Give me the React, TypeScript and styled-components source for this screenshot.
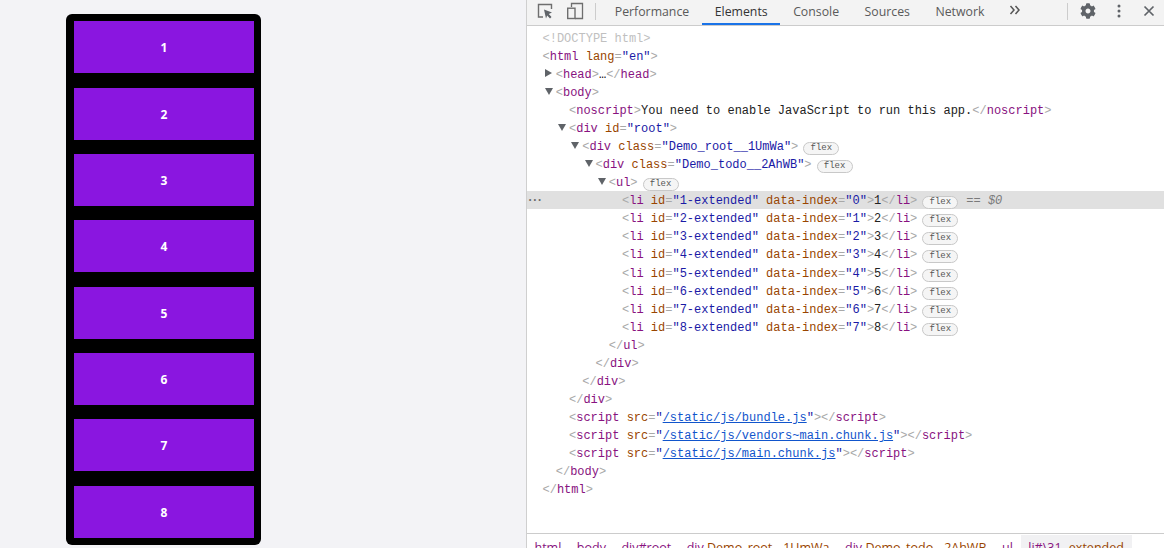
import React from 'react'
import styled, { createGlobalStyle } from 'styled-components'
import { FaCog } from 'react-icons/fa'

const GlobalStyle = createGlobalStyle`
  html, body {
    margin: 0;
    padding: 0;
    height: 100%;
    overflow: hidden;
    background: #fff;
  }
  * {
    box-sizing: border-box;
  }
`

const todos = ['1', '2', '3', '4', '5', '6', '7', '8']
const tabs = ['Performance', 'Elements', 'Console', 'Sources', 'Network']

function Open({ name, children }: { name: string; children?: React.ReactNode }) {
  return (
    <>
      <Punct>&lt;</Punct>
      <TagName>{name}</TagName>
      {children}
      <Punct>&gt;</Punct>
    </>
  )
}

function Close({ name }: { name: string }) {
  return (
    <>
      <Punct>&lt;/</Punct>
      <TagName>{name}</TagName>
      <Punct>&gt;</Punct>
    </>
  )
}

function Attr({ name, value }: { name: string; value: string }) {
  return (
    <>
      {' '}
      <AttrName>{name}</AttrName>
      <Punct>=</Punct>
      <AttrValue>"{value}"</AttrValue>
    </>
  )
}

function ScriptRow({ src }: { src: string }) {
  return (
    <Row $depth={2}>
      <Open name="script">
        {' '}
        <AttrName>src</AttrName>
        <Punct>=</Punct>
        <AttrValue>"</AttrValue>
        <SourceLink>{src}</SourceLink>
        <AttrValue>"</AttrValue>
      </Open>
      <Close name="script" />
    </Row>
  )
}

export default function App() {
  return (
    <>
      <GlobalStyle />
      <Page>
        <DemoPane>
          <TodoList>
            {todos.map((todo) => (
              <TodoItem key={todo}>{todo}</TodoItem>
            ))}
          </TodoList>
        </DemoPane>

        <DevTools>
          <Toolbar>
            <IconButton $width={30}>
              <svg width="18" height="18" viewBox="0 0 18 18" fill="none">
                <path d="M7 15H2.500V2.500H15.500V7" stroke="#6e6e6e" strokeWidth="1.400" />
                <path d="M8 7.500 16 10.500 12.800 12 15.500 15 14 16.500 11.200 13.500 10 16.500Z" fill="#5f6368" />
              </svg>
            </IconButton>
            <IconButton $width={30}>
              <svg width="18" height="18" viewBox="0 0 18 18" fill="none">
                <path d="M5.500 5V1.500H16.500V16.500H9" stroke="#6e6e6e" strokeWidth="1.300" />
                <rect x="1.700" y="6.200" width="7.300" height="10.300" stroke="#6e6e6e" strokeWidth="1.400" />
              </svg>
            </IconButton>
            <Separator $left={5} $right={6} />
            {tabs.map((tab) => (
              <Tab key={tab} $active={tab === 'Elements'}>
                {tab}
              </Tab>
            ))}
            <MoreTabs>
              <svg width="12" height="10" viewBox="0 0 12 10" fill="none">
                <path d="M1.500 1 5 5 1.500 9M6.500 1 10 5 6.500 9" stroke="#555" strokeWidth="1.500" />
              </svg>
            </MoreTabs>
            <ToolbarEnd>
              <Separator $left={1} $right={11} />
              <IconButton $width={18}>
                <FaCog size={16} color="#5f6368" />
              </IconButton>
              <IconButton $width={44}>
                <svg width="4" height="14" viewBox="0 0 4 14" fill="#5f6368">
                  <circle cx="2" cy="2" r="1.500" />
                  <circle cx="2" cy="7" r="1.500" />
                  <circle cx="2" cy="12" r="1.500" />
                </svg>
              </IconButton>
              <IconButton $width={16}>
                <svg width="12" height="12" viewBox="0 0 12 12" fill="none">
                  <path d="M1.500 1.500 10.500 10.500M10.500 1.500 1.500 10.500" stroke="#5f6368" strokeWidth="1.700" />
                </svg>
              </IconButton>
            </ToolbarEnd>
          </Toolbar>

          <Tree>
            <Row $depth={0}>
              <Doctype>&lt;!DOCTYPE html&gt;</Doctype>
            </Row>
            <Row $depth={0}>
              <Open name="html">
                <Attr name="lang" value="en" />
              </Open>
            </Row>
            <Row $depth={1}>
              <Arrow $open={false} />
              <Open name="head" />…<Close name="head" />
            </Row>
            <Row $depth={1}>
              <Arrow $open />
              <Open name="body" />
            </Row>
            <Row $depth={2}>
              <Open name="noscript" />
              <Plain>You need to enable JavaScript to run this app.</Plain>
              <Close name="noscript" />
            </Row>
            <Row $depth={2}>
              <Arrow $open />
              <Open name="div">
                <Attr name="id" value="root" />
              </Open>
            </Row>
            <Row $depth={3}>
              <Arrow $open />
              <Open name="div">
                <Attr name="class" value="Demo_root__1UmWa" />
              </Open>
              <FlexBadge>flex</FlexBadge>
            </Row>
            <Row $depth={4}>
              <Arrow $open />
              <Open name="div">
                <Attr name="class" value="Demo_todo__2AhWB" />
              </Open>
              <FlexBadge>flex</FlexBadge>
            </Row>
            <Row $depth={5}>
              <Arrow $open />
              <Open name="ul" />
              <FlexBadge>flex</FlexBadge>
            </Row>
            {todos.map((todo, index) => (
              <Row key={todo} $depth={6} $selected={index === 0}>
                {index === 0 && <RowMenu>•••</RowMenu>}
                <Open name="li">
                  <Attr name="id" value={`${todo}-extended`} />
                  <Attr name="data-index" value={String(index)} />
                </Open>
                <Plain>{todo}</Plain>
                <Close name="li" />
                <FlexBadge>flex</FlexBadge>
                {index === 0 && <ConsoleRef>== $0</ConsoleRef>}
              </Row>
            ))}
            <Row $depth={5}>
              <Close name="ul" />
            </Row>
            <Row $depth={4}>
              <Close name="div" />
            </Row>
            <Row $depth={3}>
              <Close name="div" />
            </Row>
            <Row $depth={2}>
              <Close name="div" />
            </Row>
            <ScriptRow src="/static/js/bundle.js" />
            <ScriptRow src="/static/js/vendors~main.chunk.js" />
            <ScriptRow src="/static/js/main.chunk.js" />
            <Row $depth={1}>
              <Close name="body" />
            </Row>
            <Row $depth={0}>
              <Close name="html" />
            </Row>
          </Tree>

          <Breadcrumbs>
            <Crumb>
              <CrumbTag>html</CrumbTag>
            </Crumb>
            <Crumb>
              <CrumbTag>body</CrumbTag>
            </Crumb>
            <Crumb>
              <CrumbTag>div#root</CrumbTag>
            </Crumb>
            <Crumb>
              <CrumbTag>div</CrumbTag>
              <CrumbClass>.Demo_root__1UmWa</CrumbClass>
            </Crumb>
            <Crumb>
              <CrumbTag>div</CrumbTag>
              <CrumbClass>.Demo_todo__2AhWB</CrumbClass>
            </Crumb>
            <Crumb>
              <CrumbTag>ul</CrumbTag>
            </Crumb>
            <Crumb $active>
              <CrumbTag>li#\31 </CrumbTag>
              <CrumbClass>-extended</CrumbClass>
            </Crumb>
          </Breadcrumbs>
        </DevTools>
      </Page>
    </>
  )
}

const Page = styled.div`
  display: flex;
  width: 1164px;
  height: 548px;
  overflow: hidden;
`

const DemoPane = styled.div`
  flex: 0 0 526px;
  height: 548px;
  padding: 14px 0 3px 66px;
  background: #f3f3f6;
`

const TodoList = styled.ul`
  display: flex;
  flex-direction: column;
  gap: 14.35px;
  width: 195px;
  height: 531px;
  margin: 0;
  padding: 7.2px 7px 7px 8px;
  list-style: none;
  background: #000;
  border-radius: 6px;
`

const TodoItem = styled.li`
  display: flex;
  flex: none;
  align-items: center;
  justify-content: center;
  width: 180px;
  height: 52px;
  padding-top: 1px;
  background: #8a16e0;
  color: #fff;
  font-family: 'Open Sans', 'Liberation Sans', sans-serif;
  font-size: 12px;
  font-weight: 700;
`

const DevTools = styled.div`
  display: flex;
  flex: 1;
  flex-direction: column;
  min-width: 0;
  height: 548px;
  overflow: hidden;
  border-left: 1px solid #cfcfcf;
  background: #fff;
`

const Toolbar = styled.div`
  display: flex;
  flex: 0 0 26px;
  align-items: stretch;
  height: 26px;
  padding-left: 3px;
  background: #f3f3f3;
  border-bottom: 1px solid #cccccc;
  font-family: 'Open Sans', 'Liberation Sans', sans-serif;
  font-size: 12.3px;
  color: #5a5a5a;
`

const IconButton = styled.div<{ $width: number }>`
  display: flex;
  align-items: center;
  justify-content: center;
  width: ${(p) => p.$width}px;
  height: 22px;
`

const Separator = styled.div<{ $left: number; $right: number }>`
  width: 1px;
  height: 17px;
  margin: 3px ${(p) => p.$right}px 0 ${(p) => p.$left}px;
  background: #cccccc;
`

const Tab = styled.div<{ $active?: boolean }>`
  display: flex;
  align-items: center;
  height: 25px;
  padding: 0 12.75px;
  white-space: nowrap;
  color: ${(p) => (p.$active ? '#333333' : '#5a5a5a')};
  border-bottom: 2px solid ${(p) => (p.$active ? '#1a73e8' : 'transparent')};
`

const MoreTabs = styled.div`
  display: flex;
  align-items: center;
  height: 20px;
  margin-left: 12px;
`

const ToolbarEnd = styled.div`
  display: flex;
  align-items: flex-start;
  margin-left: auto;
  padding-right: 7px;
`

const Tree = styled.div`
  flex: 1;
  min-height: 0;
  padding-top: 2.5px;
  font-family: 'Liberation Mono', 'DejaVu Sans Mono', monospace;
  font-size: 12px;
`

const Row = styled.div<{ $depth: number; $selected?: boolean }>`
  position: relative;
  height: 18.08px;
  padding-left: ${(p) => 15.5 + p.$depth * 13.25}px;
  line-height: 21.9px;
  white-space: pre;
  background: ${(p) => (p.$selected ? '#e0e0e0' : 'transparent')};
`

const Arrow = styled.span<{ $open: boolean }>`
  display: inline-block;
  width: 0;
  height: 0;
  vertical-align: 1px;
  margin-left: -11px;
  margin-right: ${(p) => (p.$open ? '3px' : '4px')};
  border-style: solid;
  border-color: transparent;
  ${(p) =>
    p.$open
      ? `border-width: 7px 4px 0; border-top-color: #5f6368;`
      : `border-width: 4px 0 4px 7px; border-left-color: #5f6368;`}
`

const Punct = styled.span`
  color: #a8a8a8;
`

const TagName = styled.span`
  color: #881280;
`

const AttrName = styled.span`
  color: #994500;
`

const AttrValue = styled.span`
  color: #1a1aa6;
`

const SourceLink = styled.span`
  color: #1155cc;
  text-decoration: underline;
`

const Doctype = styled.span`
  color: #c0c0c0;
`

const Plain = styled.span`
  color: #222222;
`

const FlexBadge = styled.span`
  display: inline-flex;
  align-items: center;
  justify-content: center;
  width: 36px;
  height: 13px;
  margin-left: 5px;
  vertical-align: 0;
  border: 1px solid #c8c8c8;
  border-radius: 7px;
  background: #f5f5f5;
  color: #555555;
  font-size: 9px;
  line-height: 11px;
`

const ConsoleRef = styled.span`
  margin-left: 8px;
  color: #7a7a7a;
  font-style: italic;
`

const RowMenu = styled.span`
  position: absolute;
  top: 0;
  left: 1px;
  color: #666666;
  font-size: 7px;
  line-height: 18px;
  letter-spacing: 0.5px;
`

const Breadcrumbs = styled.div`
  display: flex;
  flex: 0 0 15px;
  height: 15px;
  overflow: hidden;
  border-top: 1px solid #cccccc;
  font-family: 'Open Sans', 'Liberation Sans', sans-serif;
  font-size: 12.5px;
  line-height: 16px;
`

const Crumb = styled.span<{ $active?: boolean }>`
  margin-top: 1px;
  padding: 5px 8px 0 7.5px;
  white-space: pre;
  background: ${(p) => (p.$active ? '#f1f1f3' : 'transparent')};
`

const CrumbTag = styled.span`
  color: #881280;
`

const CrumbClass = styled.span`
  color: #994500;
`
